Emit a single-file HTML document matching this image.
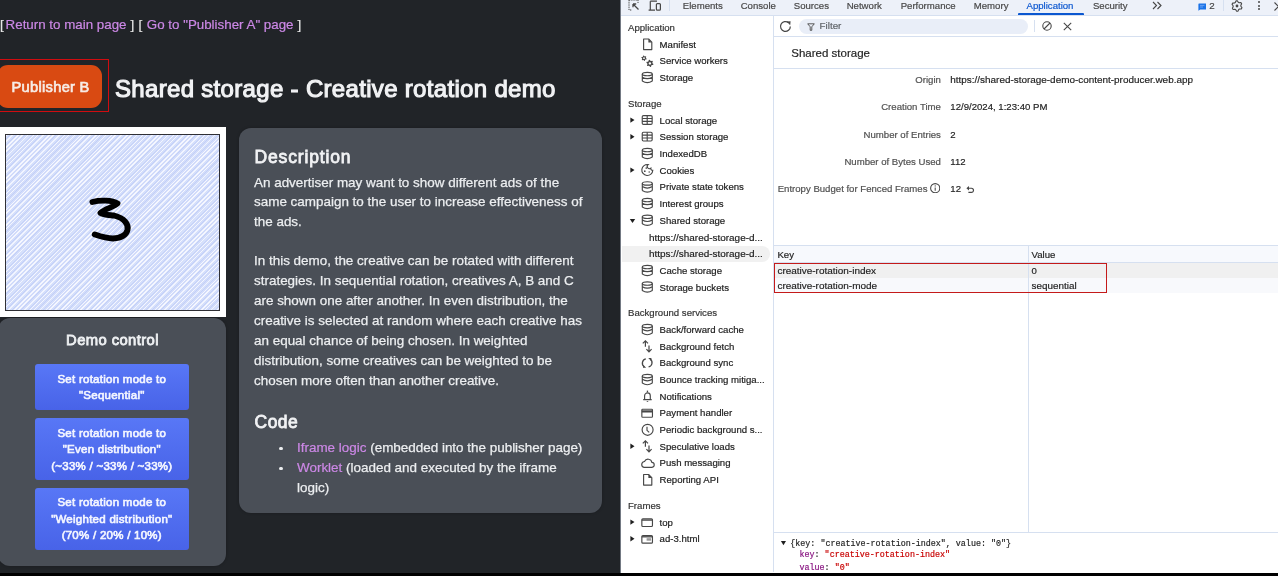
<!DOCTYPE html>
<html><head><meta charset="utf-8">
<style>
*{margin:0;padding:0;box-sizing:border-box}
html,body{width:1278px;height:576px;overflow:hidden;background:#000}
body{position:relative;font-family:"Liberation Sans",sans-serif}
#page,#dt{will-change:transform}
#dt .a{-webkit-text-stroke-width:0.18px}
.br,.lnk{-webkit-text-stroke-width:0.2px}
.a{position:absolute;white-space:nowrap}
#page{position:absolute;left:0;top:0;width:621px;height:573px;background:#212428;overflow:hidden}
#dt{position:absolute;left:620px;top:0;width:658px;height:573px;background:#fff;overflow:hidden;}
#bar{position:absolute;left:0;top:573px;width:1278px;height:3px;background:#000}
.lnk{color:#cc88e6}
.br{color:#e6e6e6}
.card{position:absolute;background:#4a4f57;border-radius:12px;box-shadow:0 0 3px rgba(0,0,0,.25)}
.btn{position:absolute;left:34.6px;width:154.4px;border-radius:3px;background:linear-gradient(#5877f6,#4863e8);color:#f4f6ff;font-weight:400;font-size:11.5px;letter-spacing:0.26px;-webkit-text-stroke:0.65px #f4f6ff;line-height:16.5px;text-align:center;padding-top:6.5px}
.dtext{color:#eceef0;font-size:13.45px;line-height:19.8px;-webkit-text-stroke-width:0.25px}
.h{color:#f1f2f4;font-weight:400;font-size:17.5px;letter-spacing:0.5px;-webkit-text-stroke:0.8px #f1f2f4}
</style></head><body>
<div id="page">
  <div class="a br" style="left:0;top:16.7px;font-size:13.35px;line-height:16px">[</div>
  <div class="a lnk" style="left:5.6px;top:16.7px;font-size:13.35px;line-height:16px">Return to main page</div>
  <div class="a br" style="left:130.5px;top:16.7px;font-size:13.35px;line-height:16px">]</div>
  <div class="a br" style="left:138.5px;top:16.7px;font-size:13.35px;line-height:16px">[</div>
  <div class="a lnk" style="left:146.8px;top:16.7px;font-size:13.35px;line-height:16px">Go to "Publisher A" page</div>
  <div class="a br" style="left:297.5px;top:16.7px;font-size:13.35px;line-height:16px">]</div>
  <div class="a" style="left:-1px;top:59px;width:109.5px;height:52.5px;border:1px solid #d00c10"></div>
  <div class="a" style="left:-3px;top:65px;width:105px;height:43px;border-radius:11px;background:#d94a12"></div>
  <div class="a" style="left:11.5px;top:79.3px;font-size:14.7px;letter-spacing:0.28px;font-weight:400;-webkit-text-stroke:0.65px #f7ece6;color:#f7ece6;line-height:16px">Publisher B</div>
  <div class="a" style="left:115px;top:76px;font-size:24px;letter-spacing:0.32px;font-weight:400;-webkit-text-stroke:1.1px #f1f2f4;color:#f1f2f4;line-height:26px">Shared storage - Creative rotation demo</div>

  <!-- demo control card -->
  <div class="card" style="left:-2px;top:318px;width:227.5px;height:248px"></div>
  <div class="a" style="left:0;top:331px;width:225px;text-align:center;font-size:14.8px;letter-spacing:0.4px;font-weight:400;-webkit-text-stroke:0.8px #eef0f2;color:#eef0f2;line-height:18px">Demo control</div>
  <div class="btn" style="top:364.3px;height:46.2px">Set rotation mode to<br>"Sequential"</div>
  <div class="btn" style="top:418px;height:62px">Set rotation mode to<br>"Even distribution"<br>(~33% / ~33% / ~33%)</div>
  <div class="btn" style="top:487.5px;height:62px">Set rotation mode to<br>"Weighted distribution"<br>(70% / 20% / 10%)</div>

  <!-- image -->
  <div class="a" style="left:0;top:127px;width:226px;height:190px;background:#fff"></div>
  <div class="a" style="left:5px;top:134px;width:214.5px;height:177px;border:1.6px solid #303035;background:repeating-linear-gradient(135deg,#f5f7ff 0px,#f5f7ff 1.1px,#d3ddfb 1.1px,#d3ddfb 2.3px,#c2cff7 2.3px,#c2cff7 3px,#d3ddfb 3px,#d3ddfb 4.1px,#f2f5ff 4.1px,#f2f5ff 5.2px,#d6e0fb 5.2px,#d6e0fb 6.9px,#c4d1f8 6.9px,#c4d1f8 7.6px,#d3ddfb 7.6px,#d3ddfb 8.4px,#f5f7ff 8.4px,#f5f7ff 9.4px,#d1dbfa 9.4px,#d1dbfa 11px)"></div>
  <svg class="a" style="left:0;top:0" width="240" height="320"><path d="M92.4,202 C100,200 112,200 117.5,203.5 C114,207 104,209 100.5,213 C103,215 109,215 114,215.5 C124,218 129,224 127.5,230 C126,236 120,238 113,238.5 C106,238.5 99,236 94.7,234.5" fill="none" stroke="#000" stroke-width="5.8" stroke-linecap="round" stroke-linejoin="round"/></svg>

  <!-- description card -->
  <div class="card" style="left:238.6px;top:128px;width:363.6px;height:384.7px"></div>
  <div class="a h" style="left:254.5px;top:146.5px;line-height:20px;letter-spacing:0.85px">Description</div>
  <div class="a dtext" style="left:254px;top:172.5px">An advertiser may want to show different ads of the<br>same campaign to the user to increase effectiveness of<br>the ads.</div>
  <div class="a dtext" style="left:254px;top:251px;line-height:20.05px">In this demo, the creative can be rotated with different<br>strategies. In sequential rotation, creatives A, B and C<br>are shown one after another. In even distribution, the<br>creative is selected at random where each creative has<br>an equal chance of being chosen. In weighted<br>distribution, some creatives can be weighted to be<br>chosen more often than another creative.</div>
  <div class="a h" style="left:254.5px;top:412px;line-height:20px">Code</div>
  <div class="a dtext" style="left:297px;top:438px"><span class="lnk">Iframe logic</span> (embedded into the publisher page)<br><span class="lnk">Worklet</span> (loaded and executed by the iframe<br>logic)</div>
  <div class="a" style="left:279.3px;top:446.6px;width:3.9px;height:3.9px;border-radius:50%;background:#eceef0"></div>
  <div class="a" style="left:279.3px;top:466.6px;width:3.9px;height:3.9px;border-radius:50%;background:#eceef0"></div>
</div>

<div id="dt">
<div class="a" style="left:0;top:0;width:658px;height:16px;background:#edf1f9;border-bottom:1px solid #d6e0f0"></div>
<div class="a" style="left:2px;top:245.8px;width:147.5px;height:16px;background:#f1f1f1;border-radius:0 8px 8px 0"></div>
<div class="a" style="left:8px;top:21.2px;font-size:9.6px;line-height:14px;color:#333;">Application</div>
<div class="a" style="left:39.6px;top:37.6px;font-size:9.6px;line-height:14px;color:#202020;">Manifest</div>
<div class="a" style="left:39.6px;top:54.3px;font-size:9.6px;line-height:14px;color:#202020;">Service workers</div>
<div class="a" style="left:39.6px;top:71.0px;font-size:9.6px;line-height:14px;color:#202020;">Storage</div>
<div class="a" style="left:8px;top:97.0px;font-size:9.6px;line-height:14px;color:#333;">Storage</div>
<div class="a" style="left:39.6px;top:113.7px;font-size:9.6px;line-height:14px;color:#202020;">Local storage</div>
<div class="a" style="left:39.6px;top:130.3px;font-size:9.6px;line-height:14px;color:#202020;">Session storage</div>
<div class="a" style="left:39.6px;top:147.0px;font-size:9.6px;line-height:14px;color:#202020;">IndexedDB</div>
<div class="a" style="left:39.6px;top:163.7px;font-size:9.6px;line-height:14px;color:#202020;">Cookies</div>
<div class="a" style="left:39.6px;top:180.4px;font-size:9.6px;line-height:14px;color:#202020;">Private state tokens</div>
<div class="a" style="left:39.6px;top:197.0px;font-size:9.6px;line-height:14px;color:#202020;">Interest groups</div>
<div class="a" style="left:39.6px;top:213.8px;font-size:9.6px;line-height:14px;color:#202020;">Shared storage</div>
<div class="a" style="left:29px;top:230.6px;font-size:9.95px;line-height:14px;color:#202020;">https://shared-storage-d...</div>
<div class="a" style="left:29px;top:247.3px;font-size:9.95px;line-height:14px;color:#202020;">https://shared-storage-d...</div>
<div class="a" style="left:39.6px;top:264.0px;font-size:9.6px;line-height:14px;color:#202020;">Cache storage</div>
<div class="a" style="left:39.6px;top:280.5px;font-size:9.6px;line-height:14px;color:#202020;">Storage buckets</div>
<div class="a" style="left:8px;top:306.2px;font-size:9.6px;line-height:14px;color:#333;">Background services</div>
<div class="a" style="left:39.6px;top:323.1px;font-size:9.6px;line-height:14px;color:#202020;">Back/forward cache</div>
<div class="a" style="left:39.6px;top:339.8px;font-size:9.6px;line-height:14px;color:#202020;">Background fetch</div>
<div class="a" style="left:39.6px;top:356.4px;font-size:9.6px;line-height:14px;color:#202020;">Background sync</div>
<div class="a" style="left:39.6px;top:373.1px;font-size:9.6px;line-height:14px;color:#202020;">Bounce tracking mitiga...</div>
<div class="a" style="left:39.6px;top:389.8px;font-size:9.6px;line-height:14px;color:#202020;">Notifications</div>
<div class="a" style="left:39.6px;top:406.4px;font-size:9.6px;line-height:14px;color:#202020;">Payment handler</div>
<div class="a" style="left:39.6px;top:423.1px;font-size:9.6px;line-height:14px;color:#202020;">Periodic background s...</div>
<div class="a" style="left:39.6px;top:439.8px;font-size:9.6px;line-height:14px;color:#202020;">Speculative loads</div>
<div class="a" style="left:39.6px;top:456.4px;font-size:9.6px;line-height:14px;color:#202020;">Push messaging</div>
<div class="a" style="left:39.6px;top:473.1px;font-size:9.6px;line-height:14px;color:#202020;">Reporting API</div>
<div class="a" style="left:8px;top:499.0px;font-size:9.6px;line-height:14px;color:#333;">Frames</div>
<div class="a" style="left:39.6px;top:515.7px;font-size:9.6px;line-height:14px;color:#202020;">top</div>
<div class="a" style="left:39.6px;top:532.4px;font-size:9.6px;line-height:14px;color:#202020;">ad-3.html</div>
<svg class="a" style="left:0;top:0" width="155" height="573"><g transform="translate(21,37.6)"><path d="M2.6 1.4H7.6L10.8 4.6V12H2.6Z" stroke="#474747" stroke-width="1.15" fill="none" stroke-linejoin="round"/><path d="M7.4 1.4V4.8H10.8Z" fill="#474747"/></g><g transform="translate(21,54.3)"><path d="M5.65 4.44 L5.42 5.10 L4.46 5.19 L4.07 5.52 L3.86 6.46 L3.17 6.59 L2.61 5.81 L2.13 5.64 L1.21 5.92 L0.75 5.39 L1.16 4.52 L1.06 4.02 L0.35 3.36 L0.58 2.70 L1.54 2.61 L1.93 2.28 L2.14 1.34 L2.83 1.21 L3.39 1.99 L3.87 2.16 L4.79 1.88 L5.25 2.41 L4.84 3.28 L4.94 3.78Z" fill="#474747"/><circle cx="3" cy="3.9" r="0.89" fill="#fff"/><path d="M12.43 9.82 L12.12 10.70 L10.84 10.82 L10.33 11.26 L10.04 12.51 L9.12 12.69 L8.39 11.64 L7.75 11.42 L6.52 11.80 L5.90 11.09 L6.44 9.92 L6.31 9.26 L5.37 8.38 L5.68 7.50 L6.96 7.38 L7.47 6.94 L7.76 5.69 L8.68 5.51 L9.41 6.56 L10.05 6.78 L11.28 6.40 L11.90 7.11 L11.36 8.28 L11.49 8.94Z" fill="#474747"/><circle cx="8.9" cy="9.1" r="1.19" fill="#fff"/></g><g transform="translate(21,71.0)"><ellipse cx="6.3" cy="3" rx="5" ry="1.7" stroke="#474747" stroke-width="1.15" fill="none"/><path d="M1.3 3V10.2 M11.3 3V10.2 M1.3 6.2Q6.3 9.2 11.3 6.2 M1.3 10Q6.3 13.3 11.3 10" stroke="#474747" stroke-width="1.15" fill="none"/></g><path d="M10.4 117.40L14.5 120.10L10.4 122.80Z" fill="#1f1f1f"/><g transform="translate(21,113.7)"><rect x="1.25" y="1.95" width="9.9" height="8.7" rx="1.2" stroke="#474747" stroke-width="1.15" fill="none"/><path d="M1.25 4.8H11.15 M1.25 7.7H11.15 M6.2 1.95V10.65" stroke="#474747" stroke-width="1.15" fill="none"/></g><path d="M10.4 134.00L14.5 136.70L10.4 139.40Z" fill="#1f1f1f"/><g transform="translate(21,130.3)"><rect x="1.25" y="1.95" width="9.9" height="8.7" rx="1.2" stroke="#474747" stroke-width="1.15" fill="none"/><path d="M1.25 4.8H11.15 M1.25 7.7H11.15 M6.2 1.95V10.65" stroke="#474747" stroke-width="1.15" fill="none"/></g><g transform="translate(21,147.0)"><ellipse cx="6.3" cy="3" rx="5" ry="1.7" stroke="#474747" stroke-width="1.15" fill="none"/><path d="M1.3 3V10.2 M11.3 3V10.2 M1.3 6.2Q6.3 9.2 11.3 6.2 M1.3 10Q6.3 13.3 11.3 10" stroke="#474747" stroke-width="1.15" fill="none"/></g><path d="M10.4 167.40L14.5 170.10L10.4 172.80Z" fill="#1f1f1f"/><g transform="translate(21,163.7)"><path d="M7.2 0.9A5.5 5.5 0 1 0 11.8 6.6 1.8 1.8 0 0 1 9.8 4.6 1.8 1.8 0 0 1 7.2 0.9Z" stroke="#474747" stroke-width="1.15" fill="none"/><circle cx="5.3" cy="4.3" r=".85" fill="#474747"/><circle cx="3.8" cy="7.5" r=".85" fill="#474747"/><circle cx="8.2" cy="8.3" r=".75" fill="#474747"/></g><g transform="translate(21,180.4)"><ellipse cx="6.3" cy="3" rx="5" ry="1.7" stroke="#474747" stroke-width="1.15" fill="none"/><path d="M1.3 3V10.2 M11.3 3V10.2 M1.3 6.2Q6.3 9.2 11.3 6.2 M1.3 10Q6.3 13.3 11.3 10" stroke="#474747" stroke-width="1.15" fill="none"/></g><g transform="translate(21,197.0)"><ellipse cx="6.3" cy="3" rx="5" ry="1.7" stroke="#474747" stroke-width="1.15" fill="none"/><path d="M1.3 3V10.2 M11.3 3V10.2 M1.3 6.2Q6.3 9.2 11.3 6.2 M1.3 10Q6.3 13.3 11.3 10" stroke="#474747" stroke-width="1.15" fill="none"/></g><path d="M9.8 219.00H15.2L12.5 222.90Z" fill="#1f1f1f"/><g transform="translate(21,213.8)"><ellipse cx="6.3" cy="3" rx="5" ry="1.7" stroke="#474747" stroke-width="1.15" fill="none"/><path d="M1.3 3V10.2 M11.3 3V10.2 M1.3 6.2Q6.3 9.2 11.3 6.2 M1.3 10Q6.3 13.3 11.3 10" stroke="#474747" stroke-width="1.15" fill="none"/></g><g transform="translate(21,264.0)"><ellipse cx="6.3" cy="3" rx="5" ry="1.7" stroke="#474747" stroke-width="1.15" fill="none"/><path d="M1.3 3V10.2 M11.3 3V10.2 M1.3 6.2Q6.3 9.2 11.3 6.2 M1.3 10Q6.3 13.3 11.3 10" stroke="#474747" stroke-width="1.15" fill="none"/></g><g transform="translate(21,280.5)"><ellipse cx="6.3" cy="3" rx="5" ry="1.7" stroke="#474747" stroke-width="1.15" fill="none"/><path d="M1.3 3V10.2 M11.3 3V10.2 M1.3 6.2Q6.3 9.2 11.3 6.2 M1.3 10Q6.3 13.3 11.3 10" stroke="#474747" stroke-width="1.15" fill="none"/></g><g transform="translate(21,323.1)"><ellipse cx="6.3" cy="3" rx="5" ry="1.7" stroke="#474747" stroke-width="1.15" fill="none"/><path d="M1.3 3V10.2 M11.3 3V10.2 M1.3 6.2Q6.3 9.2 11.3 6.2 M1.3 10Q6.3 13.3 11.3 10" stroke="#474747" stroke-width="1.15" fill="none"/></g><g transform="translate(21,339.8)"><path d="M4.4 1.3V7 M1.8 3.6L4.4 1 7 3.6 M8 5.6V11.7 M5.4 9.4L8 12 10.6 9.4" stroke="#474747" stroke-width="1.2" fill="none"/></g><g transform="translate(21,356.4)"><path d="M4.8 2.5A4.3 4.3 0 0 0 3.3 10.3 M7.6 10.5A4.3 4.3 0 0 0 9.1 2.7" stroke="#474747" stroke-width="1.3" fill="none"/><path d="M2 8.3L5.2 11.4 2 11.4Z M10.4 4.6L7.2 1.6 10.4 1.6Z" fill="#474747"/></g><g transform="translate(21,373.1)"><ellipse cx="6.3" cy="3" rx="5" ry="1.7" stroke="#474747" stroke-width="1.15" fill="none"/><path d="M1.3 3V10.2 M11.3 3V10.2 M1.3 6.2Q6.3 9.2 11.3 6.2 M1.3 10Q6.3 13.3 11.3 10" stroke="#474747" stroke-width="1.15" fill="none"/></g><g transform="translate(21,389.8)"><path d="M3.6 9.8V6A2.85 2.85 0 0 1 9.3 6V9.8 M2.2 9.8H10.7" stroke="#474747" stroke-width="1.15" fill="none"/><path d="M6.45 .8V2.4" stroke="#474747" stroke-width="1.3"/><path d="M5.3 11.1H7.6L6.45 12.3Z" fill="#474747"/></g><g transform="translate(21,406.4)"><rect x="0.85" y="2.85" width="10.6" height="8" rx="0.8" stroke="#474747" stroke-width="1.15" fill="none"/><rect x="0.85" y="3.9" width="10.6" height="2.2" fill="#474747"/></g><g transform="translate(21,423.1)"><circle cx="6.6" cy="6.7" r="5.5" stroke="#474747" stroke-width="1.15" fill="none"/><path d="M6 3.6V7.2L8.2 9.3" stroke="#474747" stroke-width="1.15" fill="none"/></g><path d="M10.4 443.50L14.5 446.20L10.4 448.90Z" fill="#1f1f1f"/><g transform="translate(21,439.8)"><path d="M4.4 1.3V7 M1.8 3.6L4.4 1 7 3.6 M8 5.6V11.7 M5.4 9.4L8 12 10.6 9.4" stroke="#474747" stroke-width="1.2" fill="none"/></g><g transform="translate(21,456.4)"><path d="M3 11H10.5A2.5 2.5 0 0 0 10.9 6A3.9 3.9 0 0 0 3.5 5.1A3 3 0 0 0 3 11Z" stroke="#474747" stroke-width="1.15" fill="none"/></g><g transform="translate(21,473.1)"><path d="M2.6 1.4H7.6L10.8 4.6V12H2.6Z" stroke="#474747" stroke-width="1.15" fill="none" stroke-linejoin="round"/><path d="M7.4 1.4V4.8H10.8Z" fill="#474747"/></g><path d="M10.4 519.40L14.5 522.10L10.4 524.80Z" fill="#1f1f1f"/><g transform="translate(21,515.7)"><rect x="0.85" y="3.15" width="10.6" height="7.6" rx="1" stroke="#474747" stroke-width="1.15" fill="none"/><path d="M0.85 4.4H11.45" stroke="#474747" stroke-width="1.3"/></g><path d="M10.4 536.10L14.5 538.80L10.4 541.50Z" fill="#1f1f1f"/><g transform="translate(21,532.4)"><rect x="0.85" y="3.15" width="10.6" height="7.6" rx="1" stroke="#474747" stroke-width="1.15" fill="none"/><path d="M0.85 4.4H11.45" stroke="#474747" stroke-width="1.3"/><rect x="5.6" y="5.8" width="4.5" height="2.5" fill="#9a9a9a"/></g></svg>
<div class="a" style="left:0;top:0;width:1.4px;height:573px;background:#737983"></div>
<div class="a" style="left:152.5px;top:15px;width:1px;height:557px;background:#d6e0f0"></div>
<div class="a" style="left:62.8px;top:-0.7px;font-size:9.6px;line-height:14px;color:#474747;">Elements</div>
<div class="a" style="left:120.7px;top:-0.7px;font-size:9.6px;line-height:14px;color:#474747;">Console</div>
<div class="a" style="left:173.8px;top:-0.7px;font-size:9.6px;line-height:14px;color:#474747;">Sources</div>
<div class="a" style="left:226.7px;top:-0.7px;font-size:9.6px;line-height:14px;color:#474747;">Network</div>
<div class="a" style="left:280.7px;top:-0.7px;font-size:9.6px;line-height:14px;color:#474747;">Performance</div>
<div class="a" style="left:353.8px;top:-0.7px;font-size:9.6px;line-height:14px;color:#474747;">Memory</div>
<div class="a" style="left:406.5px;top:-0.7px;font-size:9.6px;line-height:14px;color:#0b57d0;">Application</div>
<div class="a" style="left:472.9px;top:-0.7px;font-size:9.6px;line-height:14px;color:#474747;">Security</div>
<div class="a" style="left:398px;top:13.3px;width:65.5px;height:2px;background:#0b57d0;border-radius:1px 1px 0 0"></div>
<svg class="a" style="left:531.5px;top:1px" width="11" height="9" viewBox="0 0 11 9"><path d="M1 1l3.5 3.5L1 8 M5.5 1L9 4.5 5.5 8" fill="none" stroke="#474747" stroke-width="1.1"/></svg>
<svg class="a" style="left:577.5px;top:2.5px" width="8.5" height="8" viewBox="0 0 8.5 8"><path d="M1 .5h6.5a.8.8 0 0 1 .8.8v4.4a.8.8 0 0 1-.8.8H2.2L.4 7.8V1.3A.8.8 0 0 1 1 .5z" fill="#1a73e8"/><path d="M2 2.4h4.4 M2 4h3" stroke="#8ab4f8" stroke-width=".7"/></svg>
<div class="a" style="left:589.3px;top:-0.6px;font-size:9.8px;line-height:14px;color:#474747;">2</div>
<div class="a" style="left:603px;top:0;width:1px;height:11px;background:#d6e0f0"></div>
<div class="a" style="left:49px;top:0;width:1px;height:11px;background:#d6e0f0"></div>
<svg class="a" style="left:611.4px;top:-0.4px" width="12" height="12" viewBox="0 0 12 12"><path d="M4.99 0.90 L6.34 0.81 L7.25 2.31 L8.17 2.76 L9.91 2.57 L10.66 3.70 L9.83 5.24 L9.89 6.26 L10.92 7.67 L10.32 8.89 L8.57 8.93 L7.72 9.50 L7.01 11.10 L5.66 11.19 L4.75 9.69 L3.83 9.24 L2.09 9.43 L1.34 8.30 L2.17 6.76 L2.11 5.74 L1.08 4.33 L1.68 3.11 L3.43 3.07 L4.28 2.50Z" fill="none" stroke="#474747" stroke-width="1.1" stroke-linejoin="round"/><circle cx="6" cy="6" r="1.4" fill="#474747"/></svg>
<div class="a" style="left:637.5px;top:1.1px;width:2px;height:2px;border-radius:50%;background:#474747"></div>
<div class="a" style="left:637.5px;top:4.8px;width:2px;height:2px;border-radius:50%;background:#474747"></div>
<div class="a" style="left:637.5px;top:8.2px;width:2px;height:2px;border-radius:50%;background:#474747"></div>
<svg class="a" style="left:653.5px;top:1.5px" width="9" height="9" viewBox="0 0 9 9"><path d="M.5 .5l8 8 M8.5 .5l-8 8" stroke="#474747" stroke-width="1.1"/></svg>
<svg class="a" style="left:7.5px;top:-1px" width="12" height="12" viewBox="0 0 12 12"><path d="M1 1v10h3 M1 1h9v3" fill="none" stroke="#474747" stroke-width="1" stroke-dasharray="1.3 .9"/><path d="M5 5l5.5 5.5 M5 5h3.2 M5 5v3.2" fill="none" stroke="#474747" stroke-width="1.3"/></svg>
<svg class="a" style="left:28.3px;top:0" width="14" height="12" viewBox="0 0 14 12"><path d="M2.3 1.2H9 M2.3 1.2V9.8 M.6 10.2H7" fill="none" stroke="#474747" stroke-width="1.2"/><rect x="8.4" y="3.6" width="4" height="6.6" rx=".9" fill="none" stroke="#474747" stroke-width="1.2"/></svg>
<div class="a" style="left:153.5px;top:36px;width:505px;height:1px;background:#d6e0f0"></div>
<svg class="a" style="left:159px;top:19.5px" width="13" height="13" viewBox="0 0 13 13"><path d="M11.3 6.4A4.9 4.9 0 1 1 9.6 2.8" fill="none" stroke="#474747" stroke-width="1.25"/><path d="M7.6 1.6L11.6 1.2 11.2 5.2Z" fill="#474747"/></svg>
<div class="a" style="left:178.8px;top:19px;width:229px;height:14.5px;border-radius:7.5px;background:#e9eef8"></div>
<svg class="a" style="left:187.3px;top:22.6px" width="8" height="8" viewBox="0 0 8 8"><path d="M.7 .8h6.6L4.8 3.8v3.5H3.2V3.8z" fill="none" stroke="#474747" stroke-width=".9" stroke-linejoin="round"/></svg>
<div class="a" style="left:199.6px;top:19.3px;font-size:9.8px;line-height:14px;color:#5f6368;">Filter</div>
<div class="a" style="left:414px;top:20px;width:1px;height:12px;background:#d6e0f0"></div>
<svg class="a" style="left:421.5px;top:21px" width="10" height="10" viewBox="0 0 10 10"><circle cx="5" cy="5" r="4.2" fill="none" stroke="#474747" stroke-width="1.1"/><path d="M2 8L8 2" stroke="#474747" stroke-width="1.1"/></svg>
<svg class="a" style="left:443px;top:21.5px" width="9" height="9" viewBox="0 0 9 9"><path d="M.8 .8l7.4 7.4 M8.2 .8L.8 8.2" stroke="#474747" stroke-width="1.1"/></svg>
<div class="a" style="left:171.3px;top:45.0px;font-size:11.5px;line-height:16px;color:#1f1f1f;">Shared storage</div>
<div class="a" style="left:153.5px;top:67.5px;width:505px;height:1px;background:#d6e0f0"></div>
<div class="a" style="left:20.9px;width:300px;text-align:right;top:73.0px;font-size:9.6px;line-height:14px;color:#505050">Origin</div>
<div class="a" style="left:330.3px;top:73.0px;font-size:9.93px;line-height:14px;color:#1f1f1f;">https://shared-storage-demo-content-producer.web.app</div>
<div class="a" style="left:20.9px;width:300px;text-align:right;top:100.2px;font-size:9.6px;line-height:14px;color:#505050">Creation Time</div>
<div class="a" style="left:330.3px;top:100.2px;font-size:9.6px;line-height:14px;color:#1f1f1f;">12/9/2024, 1:23:40 PM</div>
<div class="a" style="left:20.9px;width:300px;text-align:right;top:127.5px;font-size:9.6px;line-height:14px;color:#505050">Number of Entries</div>
<div class="a" style="left:330.3px;top:127.5px;font-size:9.6px;line-height:14px;color:#1f1f1f;">2</div>
<div class="a" style="left:20.9px;width:300px;text-align:right;top:154.6px;font-size:9.6px;line-height:14px;color:#505050">Number of Bytes Used</div>
<div class="a" style="left:330.3px;top:154.6px;font-size:9.6px;line-height:14px;color:#1f1f1f;">112</div>
<div class="a" style="left:7.5px;width:300px;text-align:right;top:181.8px;font-size:9.6px;line-height:14px;color:#505050">Entropy Budget for Fenced Frames</div>
<div class="a" style="left:330.3px;top:181.8px;font-size:9.6px;line-height:14px;color:#1f1f1f;">12</div>
<svg class="a" style="left:309.8px;top:182.9px" width="10.4" height="10.4" viewBox="0 0 10 10"><circle cx="5" cy="5" r="4.4" fill="none" stroke="#474747" stroke-width="1.05"/><path d="M5 4.3v3.2" stroke="#474747" stroke-width="1"/><circle cx="5" cy="2.8" r=".6" fill="#474747"/></svg>
<svg class="a" style="left:345.8px;top:184.5px" width="9" height="9" viewBox="0 0 9 9"><path d="M.4 3.2L3 1V5.4Z" fill="#474747"/><path d="M2.5 3.2H5.4a2.1 2.1 0 0 1 0 4.2H2.4" fill="none" stroke="#474747" stroke-width="1.15"/></svg>
<div class="a" style="left:153.5px;top:245.3px;width:505px;height:1px;background:#d6e0f0"></div>
<div class="a" style="left:153.5px;top:246.3px;width:505px;height:16px;background:#f7f9fd"></div>
<div class="a" style="left:153.5px;top:262px;width:505px;height:1px;background:#d6e0f0"></div>
<div class="a" style="left:153.5px;top:263px;width:505px;height:15px;background:#f0f0f0"></div>
<div class="a" style="left:153.5px;top:278px;width:505px;height:15px;background:#f8f9fc"></div>
<div class="a" style="left:408.3px;top:246px;width:1px;height:286px;background:#d6e0f0"></div>
<div class="a" style="left:157.4px;top:248.0px;font-size:9.6px;line-height:14px;color:#1f1f1f;">Key</div>
<div class="a" style="left:411.6px;top:248.0px;font-size:9.6px;line-height:14px;color:#1f1f1f;">Value</div>
<div class="a" style="left:157.4px;top:263.7px;font-size:9.97px;line-height:14px;color:#1f1f1f;">creative-rotation-index</div>
<div class="a" style="left:157.4px;top:278.6px;font-size:9.97px;line-height:14px;color:#1f1f1f;">creative-rotation-mode</div>
<div class="a" style="left:411.6px;top:263.7px;font-size:9.6px;line-height:14px;color:#1f1f1f;">0</div>
<div class="a" style="left:411.6px;top:278.6px;font-size:9.9px;line-height:14px;color:#1f1f1f;">sequential</div>
<div class="a" style="left:153.6px;top:263.3px;width:333.4px;height:29.6px;border:1px solid #c41a1a"></div>
<div class="a" style="left:153.5px;top:531.8px;width:505px;height:1px;background:#d6e0f0"></div>
<svg class="a" style="left:160px;top:540px" width="7" height="6" viewBox="0 0 7 6"><path d="M.9 .9H6L3.45 5.3z" fill="#1f1f1f"/></svg>
<div class="a" style="left:170.3px;top:537.6px;font-size:8.37px;line-height:12px;color:#1f1f1f;font-family:&quot;Liberation Mono&quot;,monospace;">{key: "creative-rotation-index", value: "0"}</div>
<div class="a" style="left:179.5px;top:549.2px;font-size:8.37px;line-height:12px;color:#1f1f1f;font-family:&quot;Liberation Mono&quot;,monospace;"><span style="color:#881280">key</span>: <span style="color:#c80000">"creative-rotation-index"</span></div>
<div class="a" style="left:179.5px;top:562.2px;font-size:8.37px;line-height:12px;color:#1f1f1f;font-family:&quot;Liberation Mono&quot;,monospace;"><span style="color:#881280">value</span>: <span style="color:#c80000">"0"</span></div>
</div><!--/dt-->
<div id="bar"></div>
</body></html>
